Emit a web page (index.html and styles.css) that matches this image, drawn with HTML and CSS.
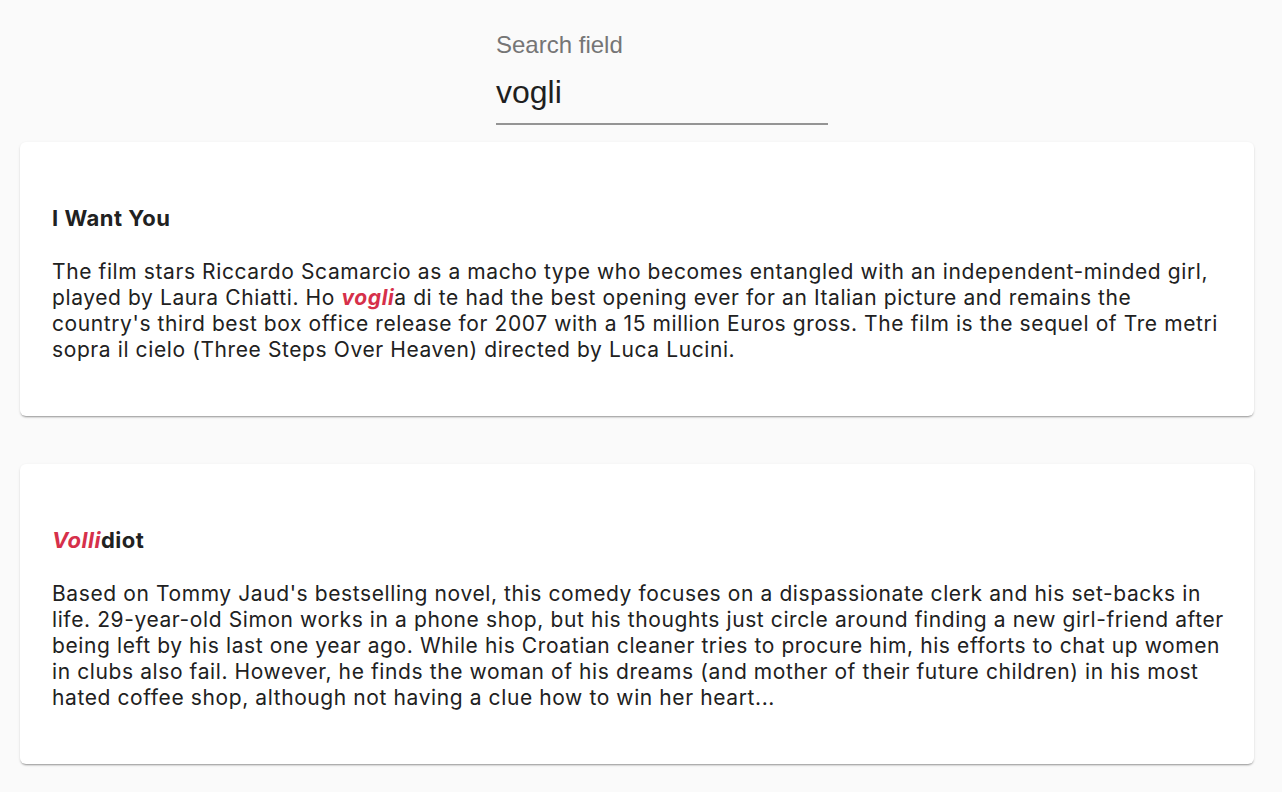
FILE: index.html
```html
<!DOCTYPE html>
<html>
<head>
<meta charset="utf-8">
<link rel="stylesheet" href="styles.css">
</head>
<body>
<div class="search">
  <label class="search-label">Search field</label>
  <div class="search-input">vogli</div>
</div>
<div class="card">
  <h3 class="card-title">I Want You</h3>
  <p class="card-text">The film stars Riccardo Scamarcio as a macho type who becomes entangled with an independent-minded girl, played by Laura Chiatti. Ho <em class="hl">vogli</em>a di te had the best opening ever for an Italian picture and remains the country's third best box office release for 2007 with a 15 million Euros gross. The film is the sequel of Tre metri sopra il cielo (Three Steps Over Heaven) directed by Luca Lucini.</p>
</div>
<div class="card">
  <h3 class="card-title"><em class="hl">Volli</em>diot</h3>
  <p class="card-text">Based on Tommy Jaud's bestselling novel, this comedy focuses on a dispassionate clerk and his set-backs in life. 29-year-old Simon works in a phone shop, but his thoughts just circle around finding a new girl-friend after being left by his last one year ago. While his Croatian cleaner tries to procure him, his efforts to chat up women in clubs also fail. However, he finds the woman of his dreams (and mother of their future children) in his most hated coffee shop, although not having a clue how to win her heart...</p>
</div>
</body>
</html>
```
FILE: styles.css
```css
html, body {
  margin: 0;
  padding: 0;
  background: #fafafa;
}
body {
  padding: 0 28px 0 20px;
  font-family: Inter, "Noto Sans", sans-serif;
  color: #212121;
}
.search {
  width: 332px;
  margin-left: 476px;
  padding-top: 30px;
  display: flex;
  flex-direction: column;
}
.search-label {
  font-family: "Liberation Sans", Arial, sans-serif;
  font-size: 24px;
  line-height: 30px;
  color: #757575;
}
.search-input {
  font-family: "Liberation Sans", Arial, sans-serif;
  font-size: 32px;
  line-height: 36px;
  color: #1f1f1f;
  padding-top: 14px;
  padding-bottom: 13px;
  border-bottom: 2px solid #949494;
}
.card {
  background: #fff;
  border-radius: 6px;
  box-shadow: 0 2px 2px -1px rgba(0,0,0,0.35), 0 1px 3px rgba(0,0,0,0.1);
  padding: 64px 23px 53px 32px;
  margin-top: 17px;
  margin-bottom: 48px;
}
.card + .card {
  margin-top: 0;
}
.card-title {
  margin: 0 0 29px 0;
  font-size: 22px;
  line-height: 24px;
  font-weight: 700;
  letter-spacing: 0.5px;
}
.card-text {
  margin: 0;
  font-size: 21px;
  line-height: 26px;
  letter-spacing: 0.6px;
}
.hl {
  color: #d6304a;
  font-weight: 700;
  font-style: italic;
}
```
